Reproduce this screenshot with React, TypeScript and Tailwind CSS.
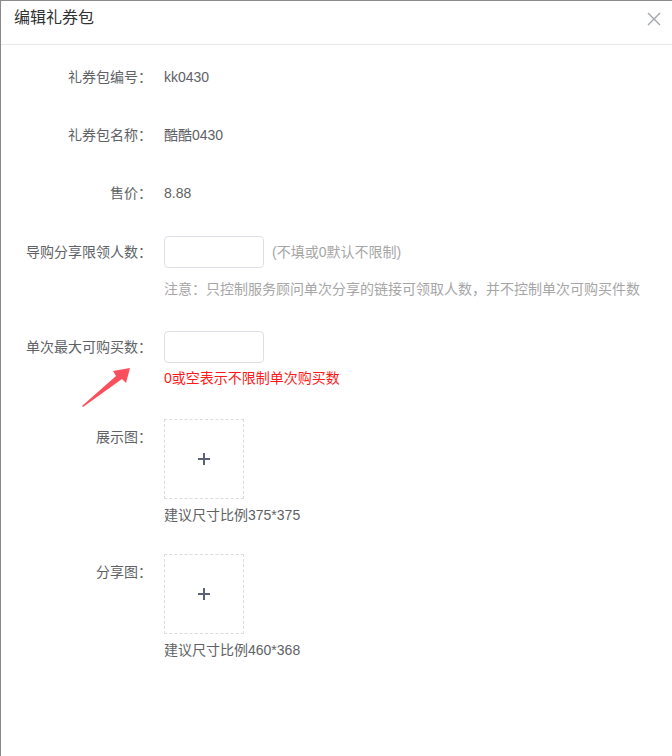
import { ReactNode } from 'react';

const font = { fontFamily: '"Liberation Sans", "Noto Sans CJK SC", sans-serif' };

function Label({ children }: { children: ReactNode }) {
  return (
    <div className="w-[163px] shrink-0 pr-3 text-right text-[14px] leading-[40px] text-[#606266]">
      {children}
    </div>
  );
}

function TextRow({ label, value, className }: { label: string; value: string; className?: string }) {
  return (
    <div className={'flex h-10 items-center ' + (className ?? '')}>
      <Label>{label}</Label>
      <div className="text-[14px] leading-[40px] text-[#606266]">{value}</div>
    </div>
  );
}

function Upload() {
  return (
    <div className="mt-[2px] flex h-20 w-20 items-center justify-center border border-dashed border-[#dcdcdc]">
      <svg width="14" height="14" viewBox="0 0 14 14" className="text-[#5b6275]">
        <path d="M7 1v12M1 7h12" stroke="currentColor" strokeWidth="2" />
      </svg>
    </div>
  );
}

export default function App() {
  return (
    <div
      className="relative h-[756px] w-[672px] overflow-hidden border-t border-l border-[#8a8a8a] bg-white"
      style={font}
    >
      {/* header */}
      <div className="flex h-[44px] items-start justify-between border-b border-[#e8e8e8] pl-[13px] pr-[11px] pt-[5px]">
        <div className="text-[16px] leading-6 text-[#303133]">编辑礼券包</div>
        <svg width="14" height="14" viewBox="0 0 14 14" className="mt-[6px] text-[#a0a3a8]">
          <path d="M1 1l12 12M13 1L1 13" stroke="currentColor" strokeWidth="1.3" />
        </svg>
      </div>

      {/* body */}
      <div className="pt-3">
        <TextRow label="礼券包编号：" value="kk0430" />
        <TextRow label="礼券包名称：" value="酷酷0430" className="mt-[18px]" />
        <TextRow label="售价：" value="8.88" className="mt-[18px]" />

        <div className="mt-[19px] flex h-10 items-center">
          <Label>导购分享限领人数：</Label>
          <div className="h-8 w-[100px] rounded border border-[#dcdfe6]" />
          <span className="ml-2 text-[14px] text-[#a6a6a6]">(不填或0默认不限制)</span>
        </div>
        <div className="mt-[7px] pl-[163px] text-[14px] leading-5 text-[#a6a6a6]">
          注意：只控制服务顾问单次分享的链接可领取人数，并不控制单次可购买件数
        </div>

        <div className="mt-7 flex h-10 items-center">
          <Label>单次最大可购买数：</Label>
          <div className="h-8 w-[100px] rounded border border-[#dcdfe6]" />
        </div>
        <div className="mt-px pl-[163px] text-[14px] leading-5 text-[#ff1a1a]">0或空表示不限制单次购买数</div>

        <div className="mt-[29px] flex items-start">
          <Label>展示图：</Label>
          <div>
            <Upload />
            <div className="mt-[6px] text-[14px] leading-5 text-[#606266]">建议尺寸比例375*375</div>
          </div>
        </div>

        <div className="mt-[27px] flex items-start">
          <Label>分享图：</Label>
          <div>
            <Upload />
            <div className="mt-[6px] text-[14px] leading-5 text-[#606266]">建议尺寸比例460*368</div>
          </div>
        </div>
      </div>

      {/* annotation arrow */}
      <svg
        width="52"
        height="44"
        viewBox="0 0 52 44"
        className="absolute left-[79px] top-[364px]"
      >
        <polygon points="2,41 36,11 33,6 50,3 46,18 42,14 3,42" fill="#fb4f5d" />
      </svg>
    </div>
  );
}
